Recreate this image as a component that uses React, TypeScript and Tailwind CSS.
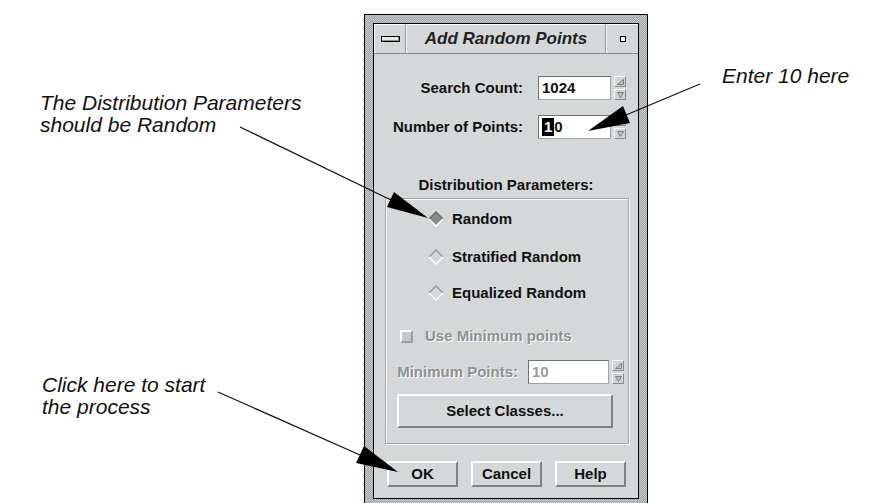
import React from "react";

const ui = "font-['Liberation_Sans',Arial,sans-serif]";

function SpinBtn({ up }: { up?: boolean }) {
  return (
    <div className="flex h-[11px] w-[12px] items-center justify-center border border-t-white border-l-white border-r-[#8a8e8e] border-b-[#8a8e8e] bg-[#cfd3d3]">
      <svg width="7" height="6" viewBox="0 0 7 6">
        {up ? (
          <path d="M0.5 5.5 L6.5 0.5 L6.5 5.5 Z" fill="#bfc3c3" stroke="#7a7e7e" strokeWidth="1" />
        ) : (
          <path d="M0.5 0.5 L6.5 0.5 L3.5 5.5 Z" fill="#bfc3c3" stroke="#7a7e7e" strokeWidth="1" />
        )}
      </svg>
    </div>
  );
}

function Spin() {
  return (
    <div className="ml-[3px] flex flex-col gap-[2px]">
      <SpinBtn up />
      <SpinBtn />
    </div>
  );
}

function Field({ value, cursor, disabled, w }: { value: string; cursor?: boolean; disabled?: boolean; w: string }) {
  return (
    <div
      className={`flex h-[24px] ${w} items-center border border-t-[#6e7272] border-l-[#6e7272] border-b-[#a0a4a4] border-r-[#a0a4a4] bg-white px-[3px] text-[15px] font-bold ${
        disabled ? "text-[#9a9e9e]" : "text-[#111]"
      }`}
    >
      {cursor ? (
        <span className="flex items-center">
          <span className="border-[2px] border-black bg-black leading-[14px] text-white">1</span>
          <span className="leading-[14px]">0</span>
        </span>
      ) : (
        value
      )}
    </div>
  );
}

function Diamond({ on }: { on?: boolean }) {
  return (
    <svg width="16" height="16" viewBox="0 0 16 16">
      <path d="M8 1 L15 8 L8 15 L1 8 Z" fill={on ? "#8a8c8c" : "#d5d8d8"} />
      <path d="M1 8 L8 1 L15 8" fill="none" stroke={on ? "#6a6c6c" : "#9a9e9e"} strokeWidth="1.5" />
      <path d="M1 8 L8 15 L15 8" fill="none" stroke="#ffffff" strokeWidth="1.5" />
    </svg>
  );
}

function Radio({ label, on }: { label: string; on?: boolean }) {
  return (
    <div className="flex h-[20px] items-center pl-[42px]">
      <Diamond on={on} />
      <span className="ml-[8px] text-[15px] font-bold text-[#111]">{label}</span>
    </div>
  );
}

function Button({ label, w, h }: { label: string; w: string; h: string }) {
  return (
    <div
      className={`flex ${w} ${h} items-center justify-center border-[2px] border-t-white border-l-white border-r-[#7e8282] border-b-[#7e8282] bg-[#d5d8d8] text-[15px] font-bold text-[#111]`}
    >
      {label}
    </div>
  );
}

const dim = "text-[#8e9292] [text-shadow:1px_1px_0_#ffffff]";

export default function App() {
  return (
    <div className={`relative h-[503px] w-[869px] overflow-hidden bg-white ${ui}`}>
      <div className="pl-[364px] pt-[14px]">
        <div className="flex h-[494px] w-[284px] flex-col border border-black bg-[repeating-conic-gradient(#9ea2a2_0_25%,#c9cccc_0_50%)] bg-[length:2px_2px] p-[8px]">
          <div className="flex flex-1 flex-col border border-black bg-[#d5d8d8]">
            {/* title bar */}
            <div className="flex h-[30px] border-b border-[#8a8e8e]">
              <div className="flex w-[32px] items-center justify-center border-r border-[#9a9e9e] border-l border-l-white border-t border-t-white">
                <div className="h-[6px] w-[19px] border border-black bg-[#e8eaea] shadow-[inset_-1px_-1px_0_#8a8e8e]" />
              </div>
              <div className="flex flex-1 items-center justify-center border-r border-[#9a9e9e] border-l border-l-white border-t border-t-white text-[17px] font-bold italic text-[#222]">
                Add Random Points
              </div>
              <div className="flex w-[32px] items-center justify-center border-l border-l-white border-t border-t-white">
                <div className="h-[6px] w-[6px] border border-black bg-white" />
              </div>
            </div>

            {/* form */}
            <div className="flex flex-col pt-[22px]">
              <div className="flex items-center">
                <div className="w-[149px] text-right text-[15px] font-bold text-[#111]">Search Count:</div>
                <div className="ml-[15px]">
                  <Field value="1024" w="w-[73px]" />
                </div>
                <Spin />
              </div>
              <div className="mt-[15px] flex items-center">
                <div className="w-[149px] text-right text-[15px] font-bold text-[#111]">Number of Points:</div>
                <div className="ml-[15px]">
                  <Field value="10" cursor w="w-[73px]" />
                </div>
                <Spin />
              </div>

              <div className="mt-[37px] h-[18px] text-center text-[15px] leading-[18px] font-bold text-[#111]">
                Distribution Parameters:
              </div>

              <div className="ml-[11px] mt-[4px] flex h-[246px] w-[244px] flex-col border border-[#a4a8a8] shadow-[inset_1px_1px_0_#ffffff,1px_1px_0_#ffffff] pt-[10px]">
                <Radio label="Random" on />
                <div className="mt-[18px]">
                  <Radio label="Stratified Random" />
                </div>
                <div className="mt-[16px]">
                  <Radio label="Equalized Random" />
                </div>

                <div className="mt-[24px] flex h-[18px] items-center pl-[14px]">
                  <div className="h-[13px] w-[13px] border-[2px] border-t-white border-l-white border-r-[#9a9e9e] border-b-[#9a9e9e] bg-[#c4c8c8]" />
                  <span className={`ml-[12px] text-[15px] font-bold ${dim}`}>Use Minimum points</span>
                </div>

                <div className="mt-[15px] flex items-center">
                  <div className={`w-[132px] text-right text-[15px] font-bold ${dim}`}>Minimum Points:</div>
                  <div className="ml-[10px]">
                    <Field value="10" disabled w="w-[81px]" />
                  </div>
                  <Spin />
                </div>

                <div className="ml-[11px] mt-[10px]">
                  <Button label="Select Classes..." w="w-[216px]" h="h-[34px]" />
                </div>
              </div>

              <div className="ml-[13px] mt-[17px] flex gap-[13px]">
                <Button label="OK" w="w-[71px]" h="h-[26px]" />
                <Button label="Cancel" w="w-[71px]" h="h-[26px]" />
                <Button label="Help" w="w-[71px]" h="h-[26px]" />
              </div>
            </div>
          </div>
        </div>
      </div>

      {/* callouts */}
      <div className="absolute left-[722px] top-[63px] text-[21px] italic leading-[26px] text-[#111]">Enter 10 here</div>
      <div className="absolute left-[40px] top-[92px] flex flex-col text-[21px] italic leading-[22px] text-[#111]">
        <span>The Distribution Parameters</span>
        <span>should be Random</span>
      </div>
      <div className="absolute left-[42px] top-[374px] flex flex-col text-[21px] italic leading-[22px] text-[#111]">
        <span>Click here to start</span>
        <span>the process</span>
      </div>

      <svg className="pointer-events-none absolute left-0 top-0" width="869" height="503" viewBox="0 0 869 503">
        <line x1="700" y1="84" x2="626" y2="115" stroke="#111" strokeWidth="1.2" />
        <path d="M588 131 L630 123 L623 106 Z" fill="#000" />
        <line x1="240" y1="127" x2="391" y2="200" stroke="#111" strokeWidth="1.2" />
        <path d="M428 218 L387 207 L394 192 Z" fill="#000" />
        <line x1="218" y1="392" x2="360" y2="455" stroke="#111" strokeWidth="1.2" />
        <path d="M398 472 L356 463 L364 446 Z" fill="#000" />
      </svg>
    </div>
  );
}
